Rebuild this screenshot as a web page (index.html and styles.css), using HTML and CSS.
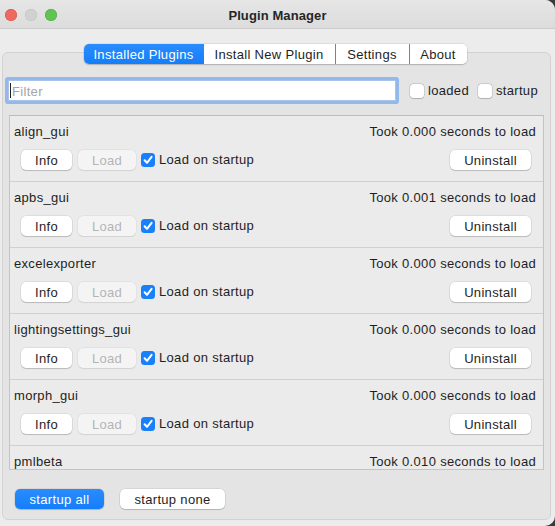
FILE: index.html
```html
<!DOCTYPE html>
<html>
<head>
<meta charset="utf-8">
<link rel="stylesheet" href="styles.css">
</head>
<body>
<div class="window">
  <header class="titlebar">
    <div class="lights">
      <span class="light red"></span>
      <span class="light gray"></span>
      <span class="light green"></span>
    </div>
    <div class="title">Plugin Manager</div>
    <div></div>
  </header>
  <main class="content">
    <nav class="tabs">
      <div class="tab tab-installed active">Installed Plugins</div>
      <div class="tab tab-new">Install New Plugin</div>
      <div class="tab tab-settings sep">Settings</div>
      <div class="tab tab-about sep">About</div>
    </nav>
    <section class="pane">
      <div class="filter-row">
        <div class="filter-input"><span class="caret"></span><span class="placeholder">Filter</span></div>
        <label class="check check-loaded"><span class="box"></span>loaded</label>
        <label class="check check-startup"><span class="box"></span>startup</label>
      </div>
      <div class="scroll">
        <div class="row">
          <div class="row-head"><span>align_gui</span><span>Took 0.000 seconds to load</span></div>
          <div class="row-actions">
            <div class="btn btn-info">Info</div>
            <div class="btn btn-load disabled">Load</div>
            <span class="cbox"><svg width="14" height="14" viewBox="0 0 14 14"><path d="M3.6 7.2 L6 9.8 L10.6 3.9" fill="none" stroke="#fff" stroke-width="2" stroke-linecap="round" stroke-linejoin="round"/></svg></span>
            <span class="cbox-label">Load on startup</span>
            <div class="btn btn-uninstall">Uninstall</div>
          </div>
        </div>
        <div class="row">
          <div class="row-head"><span>apbs_gui</span><span>Took 0.001 seconds to load</span></div>
          <div class="row-actions">
            <div class="btn btn-info">Info</div>
            <div class="btn btn-load disabled">Load</div>
            <span class="cbox"><svg width="14" height="14" viewBox="0 0 14 14"><path d="M3.6 7.2 L6 9.8 L10.6 3.9" fill="none" stroke="#fff" stroke-width="2" stroke-linecap="round" stroke-linejoin="round"/></svg></span>
            <span class="cbox-label">Load on startup</span>
            <div class="btn btn-uninstall">Uninstall</div>
          </div>
        </div>
        <div class="row">
          <div class="row-head"><span>excelexporter</span><span>Took 0.000 seconds to load</span></div>
          <div class="row-actions">
            <div class="btn btn-info">Info</div>
            <div class="btn btn-load disabled">Load</div>
            <span class="cbox"><svg width="14" height="14" viewBox="0 0 14 14"><path d="M3.6 7.2 L6 9.8 L10.6 3.9" fill="none" stroke="#fff" stroke-width="2" stroke-linecap="round" stroke-linejoin="round"/></svg></span>
            <span class="cbox-label">Load on startup</span>
            <div class="btn btn-uninstall">Uninstall</div>
          </div>
        </div>
        <div class="row">
          <div class="row-head"><span>lightingsettings_gui</span><span>Took 0.000 seconds to load</span></div>
          <div class="row-actions">
            <div class="btn btn-info">Info</div>
            <div class="btn btn-load disabled">Load</div>
            <span class="cbox"><svg width="14" height="14" viewBox="0 0 14 14"><path d="M3.6 7.2 L6 9.8 L10.6 3.9" fill="none" stroke="#fff" stroke-width="2" stroke-linecap="round" stroke-linejoin="round"/></svg></span>
            <span class="cbox-label">Load on startup</span>
            <div class="btn btn-uninstall">Uninstall</div>
          </div>
        </div>
        <div class="row">
          <div class="row-head"><span>morph_gui</span><span>Took 0.000 seconds to load</span></div>
          <div class="row-actions">
            <div class="btn btn-info">Info</div>
            <div class="btn btn-load disabled">Load</div>
            <span class="cbox"><svg width="14" height="14" viewBox="0 0 14 14"><path d="M3.6 7.2 L6 9.8 L10.6 3.9" fill="none" stroke="#fff" stroke-width="2" stroke-linecap="round" stroke-linejoin="round"/></svg></span>
            <span class="cbox-label">Load on startup</span>
            <div class="btn btn-uninstall">Uninstall</div>
          </div>
        </div>
        <div class="row">
          <div class="row-head"><span>pmlbeta</span><span>Took 0.010 seconds to load</span></div>
        </div>
      </div>
      <div class="bottom">
        <div class="btn btn-primary btn-all">startup all</div>
        <div class="btn btn-none">startup none</div>
      </div>
    </section>
  </main>
</div>
</body>
</html>
```

FILE: styles.css
```css
* { box-sizing: border-box; }

html, body {
  margin: 0;
  padding: 0;
  background: #3a3a3a;
}

body {
  width: 555px;
  height: 526px;
  overflow: hidden;
  font-family: "Liberation Sans", Arial, sans-serif;
  font-size: 13px;
  letter-spacing: 0.32px;
  color: #1e1e1e;
}

.window {
  width: 555px;
  height: 526px;
  background: #ececec;
  border-radius: 0 10px 10px 0;
  overflow: hidden;
  display: flex;
  flex-direction: column;
}

.titlebar {
  height: 29px;
  flex: none;
  display: grid;
  grid-template-columns: 1fr auto 1fr;
  align-items: center;
  background: linear-gradient(#e6e6e6, #dcdcdc);
  border-bottom: 1px solid #cdcdcd;
  padding-top: 2px;
}

.lights {
  display: flex;
  gap: 8px;
  padding-left: 5px;
}

.light {
  width: 12px;
  height: 12px;
  border-radius: 50%;
  display: block;
}
.light.red { background: #ee6a5f; box-shadow: inset 0 0 0 0.5px #d5554b; }
.light.gray { background: #d1d1d1; box-shadow: inset 0 0 0 0.5px #c0c0c0; }
.light.green { background: #5fc454; box-shadow: inset 0 0 0 0.5px #4aa93f; }

.title {
  font-weight: bold;
  color: #262626;
  font-size: 13px;
  letter-spacing: 0.1px;
}

.content {
  flex: 1;
  display: flex;
  flex-direction: column;
  padding: 0 4px 6px 2px;
}

.tabs {
  position: relative;
  z-index: 1;
  align-self: center;
  margin-top: 15px;
  margin-right: 3px;
  display: flex;
  height: 20px;
  border-radius: 5px;
  background: #fff;
  box-shadow: 0 0 0 0.5px rgba(0,0,0,0.12), 0 1px 1.5px rgba(0,0,0,0.18);
  overflow: hidden;
}

.tab {
  height: 20px;
  line-height: 20px;
  padding-top: 1px;
  text-align: center;
  color: #1e1e1e;
  background: #fff;
}
.tab.sep { border-left: 1.5px solid #3d8ff5; }
.tab-installed { width: 120px; }
.tab-new { width: 131px; }
.tab-settings { width: 74px; }
.tab-about { width: 58px; }
.tab.active {
  background: linear-gradient(#2a8cfd, #147ef9);
  color: #fff;
}

.pane {
  margin-top: -12px;
  height: 468px;
  border: 1px solid #d2d2d2;
  border-radius: 6px;
  background: #e4e4e4;
  display: flex;
  flex-direction: column;
  padding: 27px 6px 10px 6px;
}

.filter-row {
  display: flex;
  align-items: center;
  height: 21px;
  margin-left: -1px;
  flex: none;
}

.filter-input {
  width: 388px;
  height: 21px;
  background: #fff;
  border: 1px solid #a9c3ea;
  box-shadow: 0 0 0 3px #93b8ec;
  border-radius: 1px;
  display: flex;
  align-items: center;
  padding-left: 1px;
  padding-top: 2px;
}
.caret {
  width: 1px;
  height: 15px;
  background: #222;
  margin-right: 1px;
  margin-top: -2px;
}
.placeholder {
  color: #a4a4a4;
  line-height: 16px;
}

.check {
  display: flex;
  align-items: center;
  color: #1e1e1e;
  line-height: 16px;
}
.check .box {
  width: 14px;
  height: 14px;
  background: #fff;
  border-radius: 3.5px;
  box-shadow: 0 0 0 0.5px rgba(0,0,0,0.18), 0 0.5px 1px rgba(0,0,0,0.15);
  margin-right: 4px;
}
.check-loaded { margin-left: 14px; }
.check-startup { margin-left: 9px; }

.scroll {
  margin-top: 14px;
  height: 355px;
  flex: none;
  border: 1px solid #c4c4c4;
  border-top-color: #bcbcbc;
  background: #ebebeb;
  overflow: hidden;
}

.row {
  padding: 8px 7px 11px 4px;
  border-bottom: 1px solid #d0d0d0;
}

.row-head {
  display: flex;
  justify-content: space-between;
  line-height: 16px;
  height: 16px;
}

.row-actions {
  margin-top: 10px;
  height: 20px;
  display: flex;
  align-items: center;
  padding-left: 7px;
  padding-right: 5px;
}

.btn {
  height: 20px;
  line-height: 18px;
  padding-top: 2px;
  text-align: center;
  background: #fff;
  border-radius: 5px;
  color: #1e1e1e;
  box-shadow: 0 0 0 0.5px rgba(0,0,0,0.12), 0 1px 1px rgba(0,0,0,0.16);
  flex: none;
  white-space: nowrap;
}
.btn.disabled {
  background: #f4f4f4;
  color: #b4b4b4;
  box-shadow: 0 0 0 0.5px rgba(0,0,0,0.06), 0 0.5px 1px rgba(0,0,0,0.08);
}
.btn-info { width: 51px; }
.btn-load { width: 58px; margin-left: 6px; }
.btn-uninstall { width: 81px; margin-left: auto; }

.cbox {
  width: 14px;
  height: 14px;
  border-radius: 3.5px;
  background: #1a7ffa;
  margin-left: 5px;
  display: block;
  flex: none;
}
.cbox svg { display: block; }
.cbox-label { margin-left: 4px; line-height: 16px; }

.bottom {
  margin-top: 19px;
  height: 20px;
  display: flex;
  align-items: center;
  padding-left: 6px;
  flex: none;
}
.btn-primary {
  background: linear-gradient(#2a8cfd, #147ef9);
  color: #fff;
}
.btn-all { width: 89px; }
.btn-none { width: 105px; margin-left: 16px; }
```
